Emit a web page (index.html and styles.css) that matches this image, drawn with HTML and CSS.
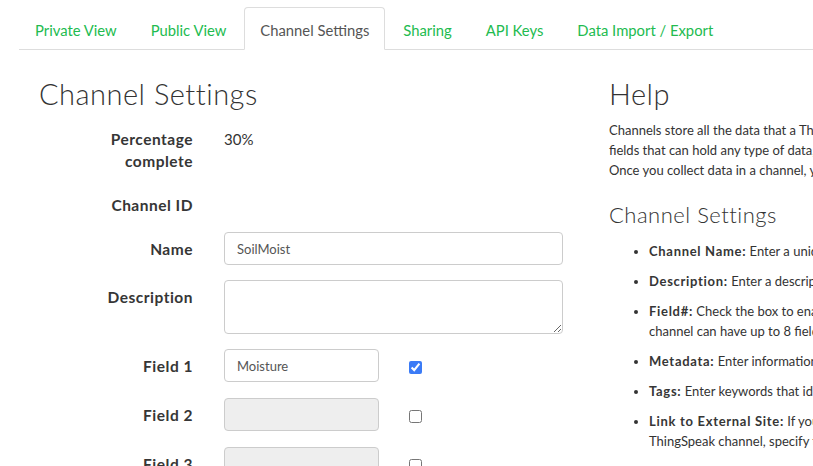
FILE: index.html
```html
<!DOCTYPE html>
<html>
<head>
<meta charset="utf-8">
<link rel="stylesheet" href="styles.css">
</head>
<body>
<div class="page">
  <ul class="tabs">
    <li class="tab"><a>Private View</a></li>
    <li class="tab"><a>Public View</a></li>
    <li class="tab active"><a>Channel Settings</a></li>
    <li class="tab"><a>Sharing</a></li>
    <li class="tab"><a>API Keys</a></li>
    <li class="tab"><a>Data Import / Export</a></li>
  </ul>
  <div class="content">
    <div class="left">
      <h1 class="title">Channel Settings</h1>
      <div class="form">
        <div class="row">
          <div class="label">Percentage<br>complete</div>
          <div class="value">30%</div>
        </div>
        <div class="row row-id">
          <div class="label">Channel ID</div>
          <div class="value"></div>
        </div>
        <div class="row row-input">
          <div class="label">Name</div>
          <input class="input wide" type="text" value="SoilMoist">
        </div>
        <div class="row row-input">
          <div class="label">Description</div>
          <textarea class="input wide area"></textarea>
        </div>
        <div class="row row-input row-field">
          <div class="label">Field 1</div>
          <input class="input field" type="text" value="Moisture">
          <input class="check" type="checkbox" checked>
        </div>
        <div class="row row-input row-field">
          <div class="label">Field 2</div>
          <input class="input field" type="text" disabled>
          <input class="check" type="checkbox">
        </div>
        <div class="row row-input row-field">
          <div class="label">Field 3</div>
          <input class="input field" type="text" disabled>
          <input class="check" type="checkbox">
        </div>
      </div>
    </div>
    <div class="right">
      <h1 class="title help-title">Help</h1>
      <p class="help-text">Channels store all the data that a ThingSpeak application collects. Each channel includes eight<br>fields that can hold any type of data, plus three fields for location data and one for status data.<br>Once you collect data in a channel, you can use ThingSpeak apps to analyze and visualize it.</p>
      <h3 class="subtitle">Channel Settings</h3>
      <ul class="help-list">
        <li><b>Channel Name:</b> Enter a unique name for the ThingSpeak channel.</li>
        <li><b>Description:</b> Enter a description of the ThingSpeak channel.</li>
        <li><b>Field#:</b> Check the box to enable the field, and enter a field name. Each ThingSpeak<br>channel can have up to 8 fields.</li>
        <li><b>Metadata:</b> Enter information about channel data, including JSON, XML, or CSV data.</li>
        <li><b>Tags:</b> Enter keywords that identify the channel. Separate tags with commas.</li>
        <li><b>Link to External Site:</b> If you have a website that contains information about your<br>ThingSpeak channel, specify the URL.</li>
        <li><b>Show Channel Location:</b> Check the box to show the location.</li>
      </ul>
    </div>
  </div>
</div>
</body>
</html>
```
FILE: styles.css
```css
html, body {
  margin: 0;
  padding: 0;
  background: #fff;
  overflow: hidden;
}
body {
  font-family: Lato, "Liberation Sans", sans-serif;
  color: #333;
  font-size: 15px;
  width: 813px;
  height: 466px;
}
.page {
  padding: 7px 0 0 19px;
  width: 1200px;
}
.tabs {
  list-style: none;
  margin: 0;
  padding: 0;
  display: flex;
  border-bottom: 1px solid #ddd;
  width: 794px;
}
.tab {
  margin-bottom: -1px;
  margin-right: 2px;
}
.tab a {
  display: block;
  padding: 12px 15px 8px 15px;
  line-height: 21px;
  font-size: 14.8px;
  color: #22bb4f;
  border: 1px solid transparent;
  border-radius: 4px 4px 0 0;
}
.tab.active a {
  color: #555;
  background: #fff;
  border-color: #ddd #ddd transparent #ddd;
}
.content {
  display: grid;
  grid-template-columns: 570px 600px;
}
.left, .right {
  padding-left: 20px;
}
.title {
  font-weight: 300;
  font-size: 29px;
  line-height: 32px;
  margin: 28px 0 18px;
  color: #333;
  letter-spacing: 0.5px;
}
.help-title {
  margin-bottom: 10px;
}
.form {
  display: flex;
  flex-direction: column;
}
.row {
  display: grid;
  grid-template-columns: 154px 339px;
  column-gap: 31px;
  margin-bottom: 22px;
  line-height: 22px;
}
.row-id {
  margin-bottom: 16px;
}
.row-input {
  margin-bottom: 15px;
  align-items: start;
  grid-template-columns: 154px 155px 14px;
  column-gap: 31px;
}
.row-field {
  margin-bottom: 16px;
}
.row-input .wide {
  grid-column: 2 / span 2;
}
.label {
  text-align: right;
  font-weight: bold;
  font-size: 15.5px;
  letter-spacing: 0.5px;
  color: #363636;
}
.row-input .label {
  padding-top: 6px;
}
.input {
  box-sizing: border-box;
  height: 33px;
  border: 1px solid #ccc;
  border-radius: 4px;
  padding: 6px 12px;
  font-family: Lato, "Liberation Sans", sans-serif;
  font-size: 13px;
  color: #555;
  background: #fff;
  margin: 0;
}
.input.wide {
  width: 339px;
}
.input.area {
  height: 54px;
  resize: vertical;
}
.input:disabled {
  background: #eee;
}
.check {
  width: 13px;
  height: 13px;
  margin: 12px 0 0 -1px;
  accent-color: #3b7bf6;
}
.help-text {
  font-size: 13px;
  line-height: 20px;
  margin: 0 0 22px;
  white-space: nowrap;
}
.subtitle {
  font-weight: 300;
  font-size: 22px;
  line-height: 26px;
  margin: 0 0 13px;
  color: #333;
  letter-spacing: 0.5px;
}
.help-list {
  font-size: 13px;
  line-height: 20px;
  margin: 0;
  padding-left: 40px;
  white-space: nowrap;
}
.help-list li {
  margin-bottom: 10px;
}
.help-list b {
  font-weight: bold;
  letter-spacing: 0.7px;
  color: #363636;
}
```
